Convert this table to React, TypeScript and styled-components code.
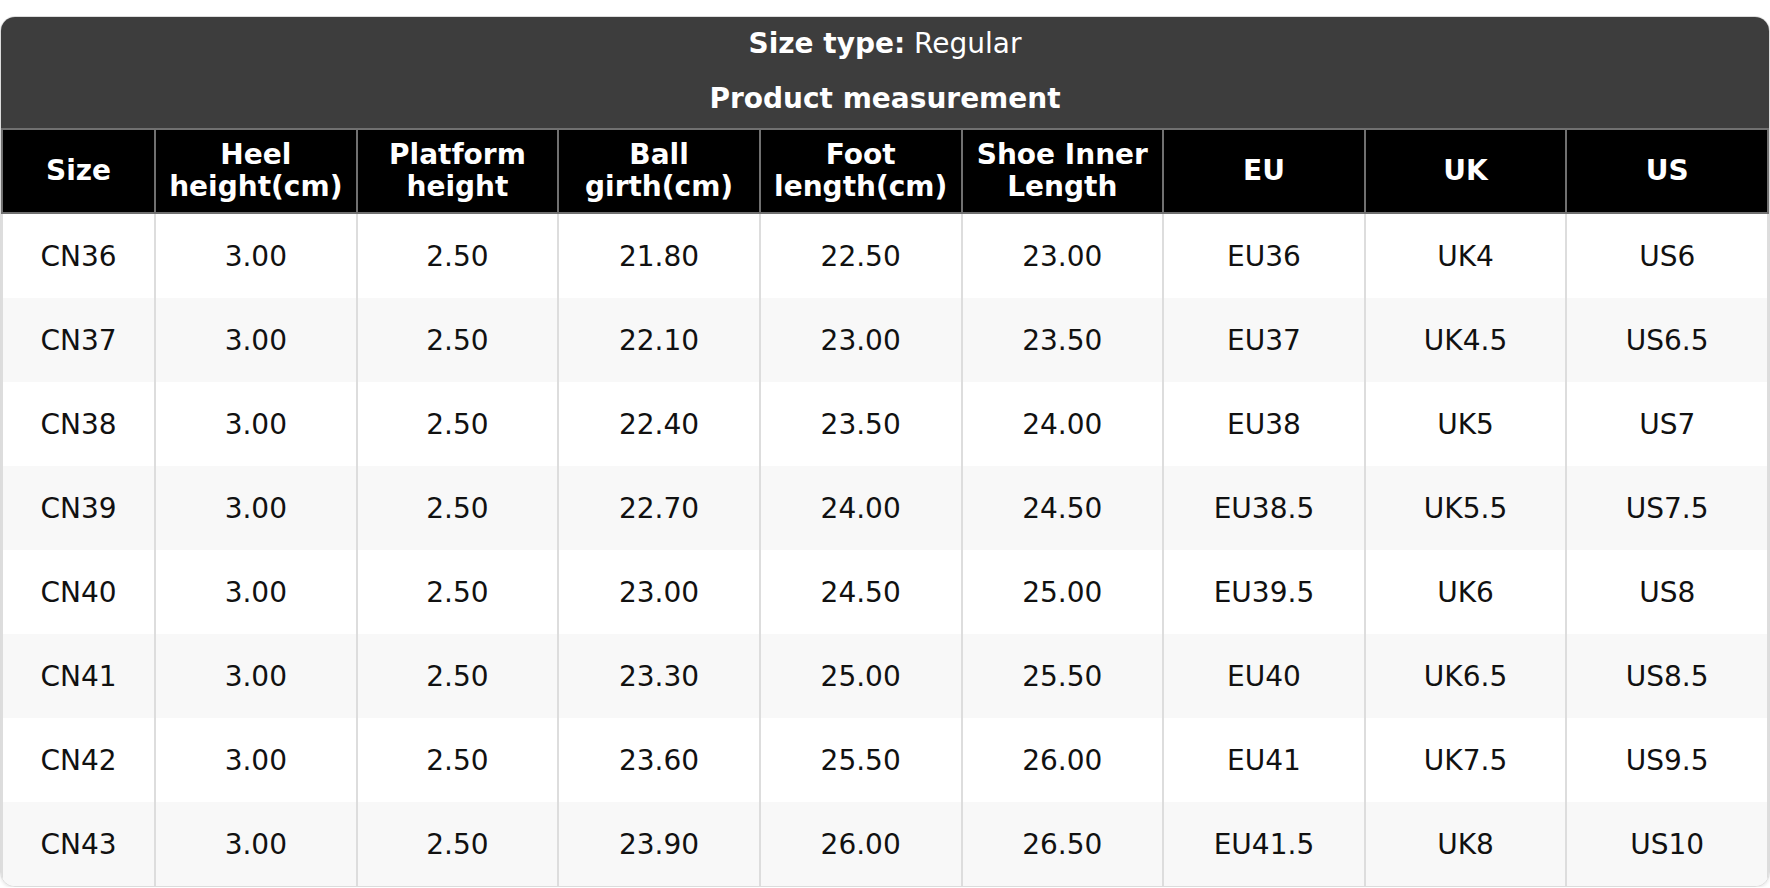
import React from "react";
import styled, { createGlobalStyle } from "styled-components";

const GlobalStyle = createGlobalStyle`
  html, body {
    margin: 0;
    padding: 0;
    background: #ffffff;
  }
  body {
    font-family: "DejaVu Sans", Verdana, sans-serif;
  }
`;

const columns = [
  { key: "size", label: ["Size"], width: 153 },
  { key: "heel", label: ["Heel", "height(cm)"] },
  { key: "platform", label: ["Platform", "height"] },
  { key: "ball", label: ["Ball", "girth(cm)"] },
  { key: "foot", label: ["Foot", "length(cm)"] },
  { key: "inner", label: ["Shoe Inner", "Length"] },
  { key: "eu", label: ["EU"] },
  { key: "uk", label: ["UK"] },
  { key: "us", label: ["US"] },
];

const rows: string[][] = [
  ["CN36", "3.00", "2.50", "21.80", "22.50", "23.00", "EU36", "UK4", "US6"],
  ["CN37", "3.00", "2.50", "22.10", "23.00", "23.50", "EU37", "UK4.5", "US6.5"],
  ["CN38", "3.00", "2.50", "22.40", "23.50", "24.00", "EU38", "UK5", "US7"],
  ["CN39", "3.00", "2.50", "22.70", "24.00", "24.50", "EU38.5", "UK5.5", "US7.5"],
  ["CN40", "3.00", "2.50", "23.00", "24.50", "25.00", "EU39.5", "UK6", "US8"],
  ["CN41", "3.00", "2.50", "23.30", "25.00", "25.50", "EU40", "UK6.5", "US8.5"],
  ["CN42", "3.00", "2.50", "23.60", "25.50", "26.00", "EU41", "UK7.5", "US9.5"],
  ["CN43", "3.00", "2.50", "23.90", "26.00", "26.50", "EU41.5", "UK8", "US10"],
];

const App = (): JSX.Element => {
  return (
    <>
      <GlobalStyle />
      <Page>
        <Card>
          <TitleBlock>
            <TitleLine>
              <strong>Size type:</strong> Regular
            </TitleLine>
            <TitleLine>
              <strong>Product measurement</strong>
            </TitleLine>
          </TitleBlock>
          <Table>
            <colgroup>
              {columns.map((c) => (
                <Col key={c.key} $width={c.width} />
              ))}
            </colgroup>
            <thead>
              <tr>
                {columns.map((c) => (
                  <HeadCell key={c.key}>
                    {c.label.map((line, i) => (
                      <HeadLine key={i}>{line}</HeadLine>
                    ))}
                  </HeadCell>
                ))}
              </tr>
            </thead>
            <tbody>
              {rows.map((row, r) => (
                <BodyRow key={row[0]} $striped={r % 2 === 1}>
                  {row.map((value, i) => (
                    <BodyCell key={i}>{value}</BodyCell>
                  ))}
                </BodyRow>
              ))}
            </tbody>
          </Table>
        </Card>
      </Page>
    </>
  );
};

export default App;

const Page = styled.div`
  padding-top: 16px;
  width: 1770px;
`;

const Card = styled.div`
  width: 100%;
  box-sizing: border-box;
  border: 1px solid #dcdcdc;
  border-radius: 15px;
  overflow: hidden;
  background: #ffffff;
  box-shadow: 0 2px 3px rgba(0, 0, 0, 0.08);
`;

const TitleBlock = styled.div`
  background: #3d3d3d;
  color: #ffffff;
  text-align: center;
  padding: 9px 0 11px;
  display: flex;
  flex-direction: column;
  gap: 19px;
`;

const TitleLine = styled.div`
  font-size: 28px;
  line-height: 36px;
  font-weight: 400;

  strong {
    font-weight: 700;
  }
`;

const Table = styled.table`
  width: 100%;
  border-collapse: collapse;
  table-layout: fixed;
`;

const Col = styled.col<{ $width?: number }>`
  width: ${(p) => (p.$width ? `${p.$width}px` : "auto")};
`;

const HeadCell = styled.th`
  background: #000000;
  color: #ffffff;
  border: 2px solid #707070;
  height: 82px;
  padding: 0 4px;
  font-size: 28px;
  font-weight: 700;
  line-height: 32px;
  text-align: center;
  vertical-align: middle;
`;

const HeadLine = styled.div`
  white-space: nowrap;
`;

const BodyRow = styled.tr<{ $striped: boolean }>`
  background: ${(p) => (p.$striped ? "#f8f8f8" : "#ffffff")};
`;

const BodyCell = styled.td`
  height: 84px;
  padding: 0;
  border-left: 2px solid #dddddd;
  border-right: 2px solid #dddddd;
  font-size: 28px;
  color: #111111;
  text-align: center;
  vertical-align: middle;
`;
